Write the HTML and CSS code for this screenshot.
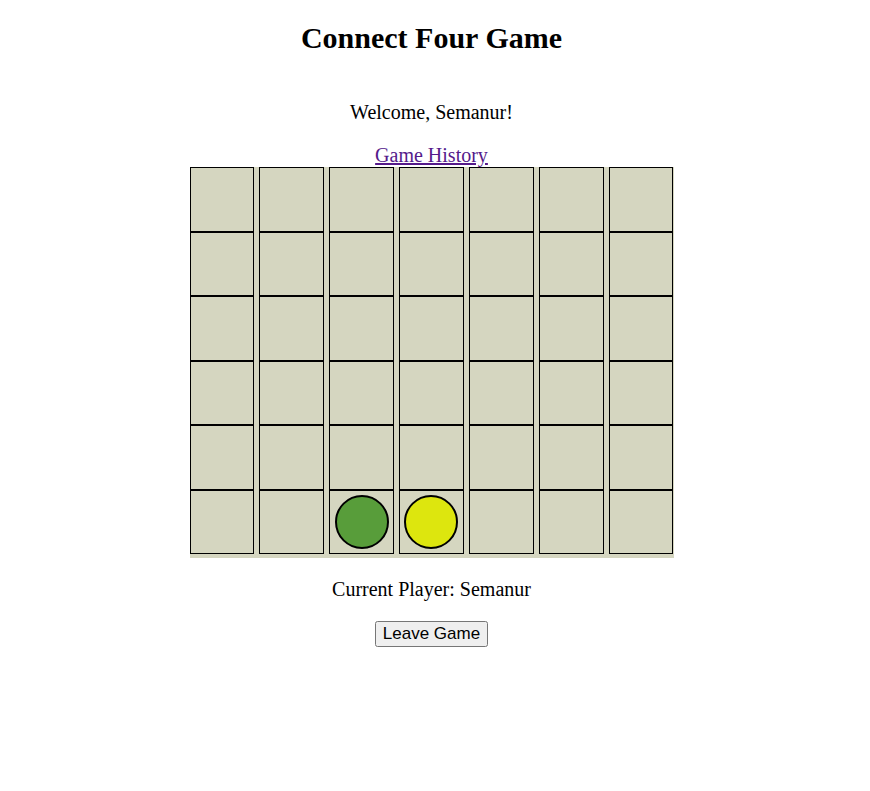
FILE: index.html
```html
<!DOCTYPE html>
<html>
<head>
<meta charset="utf-8">
<title>Connect Four Game</title>
<link rel="stylesheet" href="styles.css">
</head>
<body>
<h1 class="title">Connect Four Game</h1>
<p class="welcome">Welcome, Semanur!</p>
<a class="history" href="#">Game History</a>
<div class="board">
  <div class="cell"></div><div class="cell"></div><div class="cell"></div><div class="cell"></div><div class="cell"></div><div class="cell"></div><div class="cell"></div>
  <div class="cell"></div><div class="cell"></div><div class="cell"></div><div class="cell"></div><div class="cell"></div><div class="cell"></div><div class="cell"></div>
  <div class="cell"></div><div class="cell"></div><div class="cell"></div><div class="cell"></div><div class="cell"></div><div class="cell"></div><div class="cell"></div>
  <div class="cell"></div><div class="cell"></div><div class="cell"></div><div class="cell"></div><div class="cell"></div><div class="cell"></div><div class="cell"></div>
  <div class="cell"></div><div class="cell"></div><div class="cell"></div><div class="cell"></div><div class="cell"></div><div class="cell"></div><div class="cell"></div>
  <div class="cell"></div><div class="cell"></div><div class="cell"><span class="disc green"></span></div><div class="cell"><span class="disc yellow"></span></div><div class="cell"></div><div class="cell"></div><div class="cell"></div>
</div>
<p class="current">Current Player: Semanur</p>
<button class="leave" type="button">Leave Game</button>
</body>
</html>
```

FILE: styles.css
```css
html, body {
  background: #ffffff;
}
body {
  margin: 0 15px 8px 8px;
  padding-top: 1px;
  font-family: "Liberation Serif", "Times New Roman", serif;
  text-align: center;
  color: #000;
}
.title {
  font-size: 30px;
  line-height: 34px;
  font-weight: bold;
  margin: 20px 0 46px;
}
.welcome {
  font-size: 20px;
  line-height: 23px;
  margin: 0 0 20px;
}
.history {
  display: block;
  font-size: 20px;
  line-height: 23px;
  color: #551a8b;
  text-decoration: underline;
  width: max-content;
  margin: 0 auto;
}
.board {
  width: 484px;
  margin: 0 auto;
  background: #d5d6c0;
  display: grid;
  grid-template-columns: repeat(7, 1fr);
  grid-template-rows: repeat(6, 64.5px);
  column-gap: 5px;
  padding-bottom: 4px;
}
.cell {
  box-sizing: border-box;
  border: 1px solid #000;
  display: flex;
  align-items: center;
  justify-content: center;
}
.disc {
  box-sizing: border-box;
  width: 54px;
  height: 54px;
  border-radius: 50%;
  border: 2px solid #000;
}
.green {
  background: #589d3a;
}
.yellow {
  background: #dde60e;
}
.current {
  font-size: 20px;
  line-height: 23px;
  margin: 20px 0;
}
.leave {
  font-family: "Liberation Sans", Arial, sans-serif;
  font-size: 17px;
}
```
